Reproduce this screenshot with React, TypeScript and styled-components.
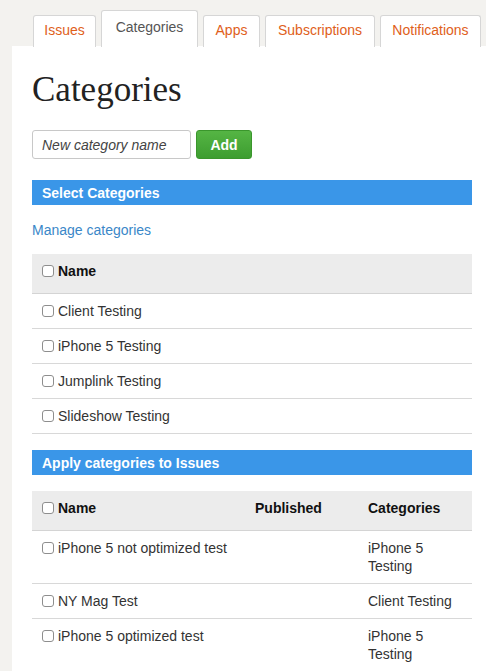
import React from 'react'
import styled, { createGlobalStyle } from 'styled-components'

const GlobalStyle = createGlobalStyle`
  html, body {
    margin: 0;
    padding: 0;
    background: #f3f2ef;
    font-family: "Liberation Sans", Arial, sans-serif;
    font-size: 14px;
    color: #333;
  }
`

type Issue = {
  name: string
  published: string
  categories: string
}

type TabItem = {
  label: string
  width: number
}

const categories = ['Client Testing', 'iPhone 5 Testing', 'Jumplink Testing', 'Slideshow Testing']

const issues: Issue[] = [
  { name: 'iPhone 5 not optimized test', published: '', categories: 'iPhone 5 Testing' },
  { name: 'NY Mag Test', published: '', categories: 'Client Testing' },
  { name: 'iPhone 5 optimized test', published: '', categories: 'iPhone 5 Testing' },
]

const tabs: TabItem[] = [
  { label: 'Issues', width: 63 },
  { label: 'Categories', width: 97 },
  { label: 'Apps', width: 57 },
  { label: 'Subscriptions', width: 110 },
  { label: 'Notifications', width: 101 },
]

const Page = styled.div`
  width: 486px;
  height: 671px;
  overflow: hidden;
  padding: 10px 0 0 12px;
  box-sizing: border-box;
`

const TabBar = styled.div`
  display: flex;
  align-items: flex-end;
  gap: 5px;
  margin-left: 21px;
  position: relative;
  z-index: 1;
  margin-bottom: -1px;
`

const Tab = styled.div<{ $active?: boolean; $width: number }>`
  width: ${(p) => p.$width}px;
  height: ${(p) => (p.$active ? '37px' : '32px')};
  box-sizing: border-box;
  display: flex;
  align-items: center;
  justify-content: center;
  background: #fff;
  border: 1px solid #d6d6d6;
  border-bottom: none;
  border-radius: 3px 3px 0 0;
  color: ${(p) => (p.$active ? '#555' : '#e0601a')};
  padding-bottom: ${(p) => (p.$active ? '4px' : '3px')};
  white-space: nowrap;
`

const Panel = styled.div`
  background: #fff;
  width: 480px;
  padding: 22px 20px 40px;
  box-sizing: border-box;
`

const Title = styled.h1`
  margin: 0;
  font-family: "Liberation Serif", Georgia, serif;
  font-weight: normal;
  font-size: 35px;
  line-height: 44px;
  color: #222;
`

const AddForm = styled.form`
  display: flex;
  gap: 5px;
  margin-top: 18px;
`

const NameInput = styled.input`
  width: 159px;
  height: 29px;
  box-sizing: border-box;
  border: 1px solid #c8c8c8;
  border-radius: 3px;
  padding: 0 9px;
  font-family: inherit;
  font-size: 14px;
  &::placeholder {
    color: #444;
    font-style: italic;
  }
`

const AddButton = styled.button`
  width: 56px;
  height: 29px;
  border: 1px solid #3a962c;
  border-radius: 3px;
  background: linear-gradient(#55b544, #3d9d30);
  color: #fff;
  font-family: inherit;
  font-weight: bold;
  font-size: 14px;
`

const SectionBar = styled.div<{ $top: number }>`
  margin-top: ${(p) => p.$top}px;
  height: 25px;
  background: #3a96e8;
  color: #fff;
  font-weight: bold;
  padding-left: 10px;
  display: flex;
  align-items: center;
`

const ManageLink = styled.a`
  display: block;
  margin-top: 16px;
  color: #3a87c8;
  text-decoration: none;
  line-height: 18px;
`

const Table = styled.table<{ $top: number }>`
  width: 440px;
  margin-top: ${(p) => p.$top}px;
  border-collapse: collapse;
  table-layout: fixed;
`

const HeadCell = styled.th<{ $width?: number }>`
  width: ${(p) => (p.$width ? `${p.$width}px` : 'auto')};
  background: #ececec;
  border-bottom: 1px solid #d4d4d4;
  padding: 8px 10px 13px;
  line-height: 18px;
  text-align: left;
  font-weight: bold;
  color: #111;
`

const Cell = styled.td`
  border-bottom: 1px solid #d8d8d8;
  padding: 8px 10px;
  line-height: 18px;
  vertical-align: top;
`

const Check = styled.input.attrs({ type: 'checkbox' })`
  appearance: none;
  width: 12px;
  height: 12px;
  margin: 0 4px 0 0;
  border: 1px solid #8e8e8e;
  border-radius: 3px;
  background: #fff;
  vertical-align: -1px;
`

export default function App() {
  return (
    <Page>
      <GlobalStyle />
      <TabBar>
        {tabs.map((t) => (
          <Tab key={t.label} $width={t.width} $active={t.label === 'Categories'}>
            {t.label}
          </Tab>
        ))}
      </TabBar>
      <Panel>
        <Title>Categories</Title>
        <AddForm onSubmit={(e) => e.preventDefault()}>
          <NameInput placeholder="New category name" />
          <AddButton type="submit">Add</AddButton>
        </AddForm>

        <SectionBar $top={21}>Select Categories</SectionBar>
        <ManageLink href="#">Manage categories</ManageLink>
        <Table $top={15}>
          <thead>
            <tr>
              <HeadCell>
                <Check />
                Name
              </HeadCell>
            </tr>
          </thead>
          <tbody>
            {categories.map((c) => (
              <tr key={c}>
                <Cell>
                  <Check />
                  {c}
                </Cell>
              </tr>
            ))}
          </tbody>
        </Table>

        <SectionBar $top={16}>Apply categories to Issues</SectionBar>
        <Table $top={16}>
          <thead>
            <tr>
              <HeadCell>
                <Check />
                Name
              </HeadCell>
              <HeadCell $width={93}>Published</HeadCell>
              <HeadCell $width={94}>Categories</HeadCell>
            </tr>
          </thead>
          <tbody>
            {issues.map((i) => (
              <tr key={i.name}>
                <Cell>
                  <Check />
                  {i.name}
                </Cell>
                <Cell>{i.published}</Cell>
                <Cell>{i.categories}</Cell>
              </tr>
            ))}
          </tbody>
        </Table>
      </Panel>
    </Page>
  )
}
